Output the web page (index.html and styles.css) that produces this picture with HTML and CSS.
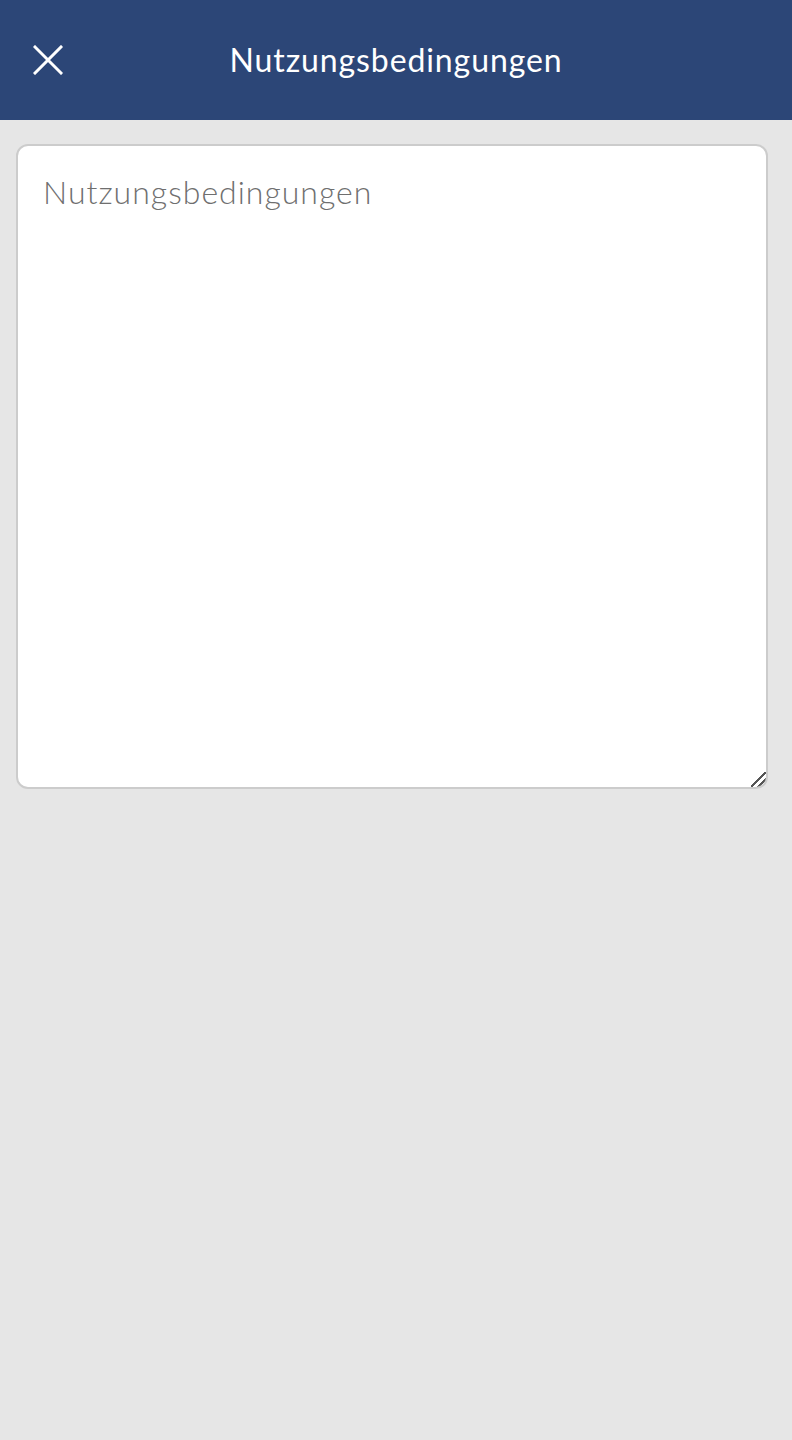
FILE: index.html
```html
<!DOCTYPE html>
<html lang="de">
<head>
<meta charset="utf-8">
<title>Nutzungsbedingungen</title>
<link rel="stylesheet" href="styles.css">
</head>
<body>
<header class="topbar">
  <button class="close" aria-label="Schließen">
    <svg width="30" height="30" viewBox="0 0 30 30"><path d="M2 2 L28 28 M28 2 L2 28" stroke="#fff" stroke-width="3" stroke-linecap="square" fill="none"/></svg>
  </button>
  <h1 class="title">Nutzungsbedingungen</h1>
</header>
<main class="content">
  <textarea class="terms" placeholder="Nutzungsbedingungen"></textarea>
</main>
</body>
</html>
```
FILE: styles.css
```css
html, body {
  margin: 0;
  padding: 0;
  background: #e6e6e6;
  font-family: Lato, "Noto Sans", sans-serif;
}
.topbar {
  position: relative;
  height: 120px;
  background: #2c4677;
  display: flex;
  align-items: center;
  justify-content: center;
}
.close {
  position: absolute;
  left: 33px;
  top: 45px;
  width: 30px;
  height: 30px;
  padding: 0;
  border: 0;
  background: none;
  display: block;
}
.close svg { display: block; }
.title {
  margin: 0 0 2px 0;
  color: #fff;
  font-weight: 400;
  font-size: 32px;
  letter-spacing: 0.9px;
}
.content {
  padding: 24px 24px 0 16px;
}
.terms {
  display: block;
  box-sizing: border-box;
  width: 752px;
  height: 645px;
  border: 2px solid #cccccc;
  border-radius: 12px;
  background: #fff;
  padding: 26px 24px 26px 25px;
  font-family: Lato, "Noto Sans", sans-serif;
  font-size: 32px;
  font-weight: 300;
  letter-spacing: 1px;
  color: #333;
  resize: vertical;
  outline: none;
}
.terms::placeholder {
  color: #6f6f6f;
  opacity: 1;
}
.terms::-webkit-resizer {
  background:
    linear-gradient(135deg, transparent 0 46%, #555 46% 56%, transparent 56% 70%, #555 70% 80%, transparent 80%);
  border-bottom-right-radius: 10px;
}
```
